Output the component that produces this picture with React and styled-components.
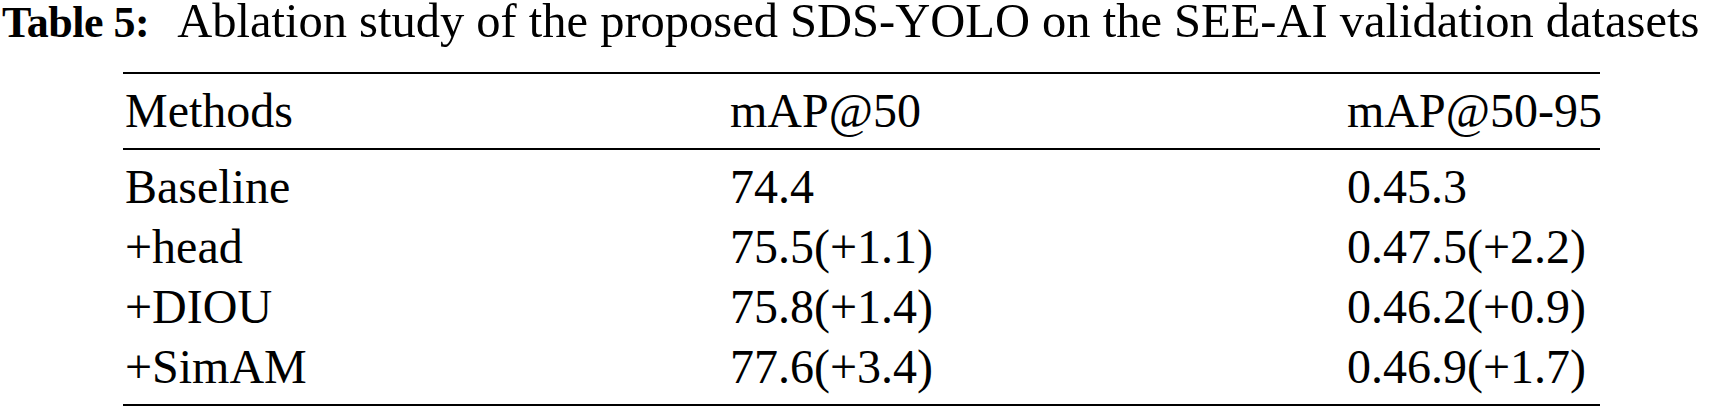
import React from "react";
import styled, { createGlobalStyle } from "styled-components";

const GlobalStyle = createGlobalStyle`
    html, body {
        margin: 0;
        padding: 0;
        background-color: #fff;
    }
`;

const Page = styled.div`
    width: 1712px;
    height: 412px;
    background-color: #fff;
    color: #000;
    font-family: "Liberation Serif", "Times New Roman", serif;
    overflow: hidden;
`;

const Caption = styled.div`
    font-size: 48.5px;
    line-height: 42px;
    height: 42px;
    padding-left: 2px;
    white-space: nowrap;
`;

const CaptionLabel = styled.span`
    font-weight: bold;
    font-size: 44px;
    letter-spacing: -0.5px;
    margin-right: 28px;
`;

const Table = styled.div`
    margin: 30px 0 0 123px;
    width: 1477px;
    border-top: 2px solid #000;
    border-bottom: 2px solid #000;
`;

const Section = styled.div`
    padding: 7px 0;
    border-bottom: ${(p) => (p.$ruled ? "2px solid #000" : "none")};
`;

const Row = styled.div`
    display: grid;
    grid-template-columns: 605px 617px 1fr;
    padding-left: 2px;
    height: 60px;
    font-size: 48px;
    line-height: 60px;
    white-space: nowrap;
`;

const Cell = styled.div``;

const rows = [
    ["Baseline", "74.4", "0.45.3"],
    ["+head", "75.5(+1.1)", "0.47.5(+2.2)"],
    ["+DIOU", "75.8(+1.4)", "0.46.2(+0.9)"],
    ["+SimAM", "77.6(+3.4)", "0.46.9(+1.7)"],
];

const App = () => {
    return (
        <Page>
            <GlobalStyle />
            <Caption>
                <CaptionLabel>Table 5:</CaptionLabel>
                Ablation study of the proposed SDS-YOLO on the SEE-AI validation datasets
            </Caption>
            <Table>
                <Section $ruled>
                    <Row>
                        <Cell>Methods</Cell>
                        <Cell>mAP@50</Cell>
                        <Cell>mAP@50-95</Cell>
                    </Row>
                </Section>
                <Section>
                    {rows.map((r, i) => (
                        <Row key={i}>
                            {r.map((c, j) => (
                                <Cell key={j}>{c}</Cell>
                            ))}
                        </Row>
                    ))}
                </Section>
            </Table>
        </Page>
    );
};

export default App;
